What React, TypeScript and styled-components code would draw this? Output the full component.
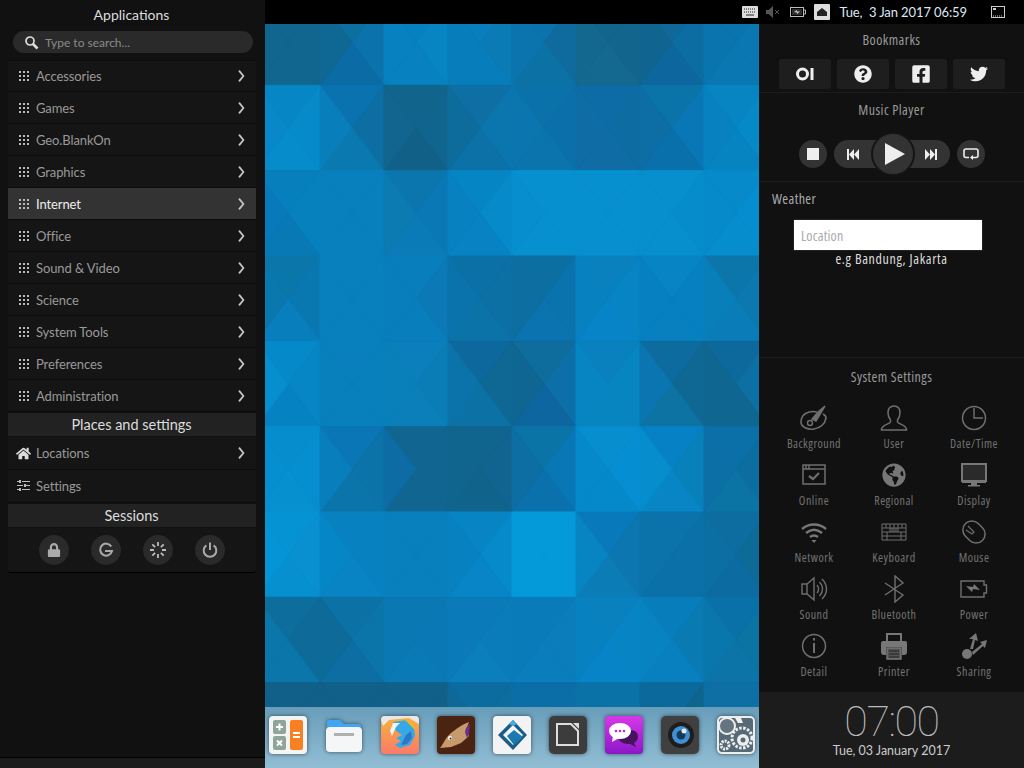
import React from "react"
import styled, { createGlobalStyle } from "styled-components"
import {
  FaGlobeAmericas,
  FaHome,
  FaLock,
  FaQuestionCircle,
  FaFacebookSquare,
  FaTwitter,
} from "react-icons/fa"

const GlobalStyle = createGlobalStyle`
  html, body {
    margin: 0;
    padding: 0;
    background: #000;
    overflow: hidden;
  }
  * {
    box-sizing: border-box;
  }
`

const Narrow = `"Open Sans", "Noto Sans", sans-serif`
const Humanist = `Lato, "Noto Sans", sans-serif`

const Screen = styled.div`
  width: 1024px;
  height: 768px;
  display: grid;
  grid-template-columns: 265px 494px 265px;
  grid-template-rows: 24px 744px;
  font-family: ${Humanist};
`

/* left menu */
const LeftPanel = styled.aside`
  grid-row: 1 / 3;
  grid-column: 1;
  background: #111;
  display: flex;
  flex-direction: column;
  height: 768px;
`
const MenuTitle = styled.div`
  height: 31px;
  line-height: 30px;
  padding-right: 2px;
  text-align: center;
  color: #ddd;
  font-size: 14px;
`
const SearchBox = styled.div`
  margin: 0 12px 7px 13px;
  height: 22px;
  border-radius: 11px;
  background: #2a2a2a;
  display: flex;
  align-items: center;
  gap: 6px;
  padding-left: 11px;
  color: #8a8a8a;
  font-size: 12px;
`
const MenuColumn = styled.div`
  margin: 0 9px 0 8px;
  border-top: 1px solid #0b0b0b;
  display: flex;
  flex-direction: column;
`
const MenuRow = styled.div<{ $active?: boolean; $tall?: boolean }>`
  height: ${(p) => (p.$tall ? 33 : 32)}px;
  display: flex;
  align-items: center;
  padding: 0 11px;
  gap: 7px;
  background: ${(p) => (p.$active ? "#333" : "#151515")};
  border-bottom: 1px solid #0c0c0c;
  color: ${(p) => (p.$active ? "#eee" : "#999")};
  font-size: 13px;
  letter-spacing: -0.1px;
  &:first-child {
    height: 31px;
  }
`
const MenuLabel = styled.span`
  flex: 1;
`
const IconSlot = styled.span`
  width: 15px;
  margin: 0 -2px 0 -3px;
  display: flex;
  align-items: center;
  justify-content: center;
`
const SectionHeader = styled.div`
  height: 24px;
  line-height: 24px;
  padding-right: 1px;
  text-align: center;
  background: #222;
  color: #ddd;
  font-size: 14.5px;
  margin-top: 1px;
  border-bottom: 1px solid #111;
`
const SessionRow = styled.div`
  height: 45px;
  display: flex;
  align-items: center;
  justify-content: center;
  gap: 22px;
  background: #151515;
  border-bottom: 1px solid #000;
  border-radius: 0 0 3px 3px;
`
const RoundButton = styled.div`
  width: 30px;
  height: 30px;
  border-radius: 50%;
  background: #2a2a2a;
  display: flex;
  align-items: center;
  justify-content: center;
  color: #aaa;
`
const LeftFooter = styled.div`
  margin-top: auto;
  height: 11px;
  background: #1c1c1c;
  border-top: 1px solid #000;
`

/* top bar */
const TopBar = styled.header`
  grid-column: 2 / 4;
  grid-row: 1;
  background: #000;
  display: flex;
  align-items: center;
  justify-content: flex-end;
  padding-right: 19px;
`
const Tray = styled.div`
  display: flex;
  align-items: center;
  margin-right: 9px;
  gap: 8px;
`
const ActiveTray = styled.div`
  width: 16px;
  height: 16px;
  background: #ddd;
  border-radius: 1px;
  display: flex;
  align-items: center;
  justify-content: center;
`
const ClockText = styled.div`
  color: #dde8f5;
  font-size: 13px;
  letter-spacing: -0.1px;
  white-space: pre;
  margin-right: 24px;
`

/* desktop */
const Desktop = styled.main`
  grid-column: 2;
  grid-row: 2;
  position: relative;
  display: flex;
  flex-direction: column;
  justify-content: flex-end;
  overflow: hidden;
`
const WallpaperSvg = styled.svg`
  position: absolute;
  inset: 0;
  width: 494px;
  height: 744px;
`
const Dock = styled.div`
  position: relative;
  height: 61px;
  padding: 9px 0 0 4px;
  display: flex;
  gap: 18px;
  background: linear-gradient(#689dba, #92bed4);
`
const DockIcon = styled.svg`
  width: 38px;
  height: 38px;
  flex: none;
  filter: drop-shadow(0 0 2px rgba(0, 0, 0, 0.55));
`

/* right panel */
const RightPanel = styled.aside`
  grid-column: 3;
  grid-row: 2;
  background: #111;
  display: flex;
  flex-direction: column;
`
const Section = styled.section<{ $h: number; $bare?: boolean }>`
  height: ${(p) => p.$h}px;
  border-bottom: ${(p) => (p.$bare ? "none" : "1px solid #1c1c1c")};
  display: flex;
  flex-direction: column;
`
const SectionTitle = styled.div<{ $top?: number }>`
  text-align: center;
  color: #999;
  font-family: ${Narrow};
  font-stretch: 75%;
  font-size: 14px;
  letter-spacing: 0.45px;
  line-height: 16px;
  padding-top: ${(p) => p.$top ?? 8}px;
`
const BookmarkRow = styled.div`
  display: flex;
  justify-content: center;
  gap: 6px;
  margin-top: 11px;
  padding-left: 1px;
`
const BookmarkButton = styled.div`
  width: 52px;
  height: 30px;
  border-radius: 3px;
  background: #1e1e1e;
  display: flex;
  align-items: center;
  justify-content: center;
  color: #eee;
`
const PlayerRow = styled.div`
  display: flex;
  justify-content: center;
  align-items: center;
  gap: 7px;
  margin-top: 22px;
  padding-left: 1px;
`
const PlayerRound = styled.div`
  width: 28px;
  height: 28px;
  border-radius: 50%;
  background: #333;
  display: flex;
  align-items: center;
  justify-content: center;
`
const PlayerPill = styled.div`
  position: relative;
  width: 116px;
  height: 28px;
  border-radius: 14px;
  background: #333;
  display: flex;
  align-items: center;
  justify-content: space-between;
  padding: 0 13px;
`
const PlayButton = styled.div`
  position: absolute;
  left: 37px;
  top: -8px;
  width: 44px;
  height: 44px;
  border-radius: 50%;
  background: #333;
  border: 2px solid #151515;
  display: flex;
  align-items: center;
  justify-content: center;
  padding-left: 3px;
`
const WeatherLabel = styled.div`
  color: #aaa;
  font-family: ${Narrow};
  font-stretch: 75%;
  font-size: 14px;
  letter-spacing: 0.4px;
  padding: 9px 0 0 13px;
  line-height: 16px;
`
const LocationInput = styled.input`
  display: block;
  margin: 12px 0 0 34px;
  width: 190px;
  height: 32px;
  border: 1px solid #222;
  background: #fff;
  padding: 0 7px;
  font-family: ${Narrow};
  font-stretch: 75%;
  font-size: 14px;
  letter-spacing: 0.2px;
  &::placeholder {
    color: #aaa;
  }
`
const Hint = styled.div`
  text-align: center;
  color: #ddd;
  font-family: ${Narrow};
  font-stretch: 75%;
  font-size: 14px;
  letter-spacing: 0.65px;
  line-height: 16px;
`
const SettingsGrid = styled.div`
  display: grid;
  grid-template-columns: repeat(3, 80px);
  grid-auto-rows: 51px;
  row-gap: 6px;
  padding-left: 15px;
  margin-top: 15px;
`
const SettingItem = styled.div`
  display: flex;
  flex-direction: column;
  align-items: center;
  color: #737373;
  font-family: ${Narrow};
  font-stretch: 75%;
  font-size: 12px;
  letter-spacing: 0.5px;
  line-height: 14px;
`
const SettingIcon = styled.div`
  height: 36px;
  margin-bottom: 1px;
  display: flex;
  align-items: center;
  justify-content: center;
`
const ClockPanel = styled.div`
  flex: 1;
  background: #1c1c1c;
  text-align: center;
  color: #ccc;
`
const BigTime = styled.div`
  font-family: Roboto, Lato, sans-serif;
  font-weight: 100;
  font-size: 43px;
  letter-spacing: -1.5px;
  line-height: 36px;
  margin-top: 11px;
  color: #bbb;
`
const DateLine = styled.div`
  font-size: 12.5px;
  line-height: 16px;
  margin-top: 4px;
`
const BatterySvg = styled.svg`
  margin-left: 2px;
`

/* wallpaper: one row per screen row, four triangles per cell, clockwise from the top */
const wallpaper: string[][] = [
  ["10668f 10668f 10668f 10668f", "0d6f9f 0a74ae 0b6ba6 10668f", "0681bf 0686c3 0781bf 0781bf", "0880bd 0a7ab4 087dbb 087dbb", "0a72ad 10699a 0c72a5 0a75b2", "12648c 12648c 146a90 136890", "11689a 0b6ea6 0c669f 11648c", "0a73ad 0b78b2 0a78b4 0a73ad"],
  ["0685c4 078ac9 068ccc 0888c8", "0a72af 0e6b9f 0a7aaf 0781bf", "11648c 10658f 115f87 11658f", "0d6fa4 0a78b0 0c71a8 0e6a9a", "0b70a8 0b6fa8 0b74ad 0b76b0", "0d6ca5 0d6ca0 0f6ca5 0f6ca5", "0a74a8 0878b8 0a6fab 0d6da3", "0685c2 068ac9 0682c0 0780bf"],
  ["0680bd 0783bf 0a78b4 0878bb", "0880bd 0880bd 0880bd 0880bd", "0a75ab 0a78b5 0a7cb9 0b7bb0", "0685c4 068ccc 0782c3 0780bf", "0690d0 0690d0 0690d0 068dce", "0690cf 0690cf 0690cf 0690cf", "068ecd 068ccb 068ecd 068ecd", "068ac8 058fd0 058dcd 0689c8"],
  ["0b75a8 0a78b0 0980bf 0a78ad", "0880be 0880be 0880be 0880be", "087fbd 0a78b4 087fbd 087fbd", "0b70a6 0c6fa3 0c74a9 0b74ac", "0c6e9e 0a74b0 0a74b2 0d6da0", "0880bd 0685c4 0785c8 0880c0", "0685c4 0680c0 0880bf 0680c0", "0c74a7 0c78ad 0a7cb9 0880bc"],
  ["068ac8 0785c4 0580c0 0690d0", "0a7fbd 0880bc 0880bc 0880bc", "0a7fbc 0a7bb5 0a7fba 0a80bb", "0d679c 10658f 0c72a5 0b75ae", "0e6e9c 0b70aa 0d659f 10658f", "0880bd 0785c0 0785c0 0785c4", "0d6a9e 10658f 0c74a4 0977b5", "0d699c 0c72a8 0f668f 0f668f"],
  ["068ccc 068fd0 0690d0 058fd0", "0a76b8 0b72a5 0b74a8 0880c0", "10658f 10658f 10648f 0c6ea8", "10658f 10648f 10628a 10658f", "0b74a5 0878b8 0b70ae 0d6da0", "068fd0 058fd2 0688c9 0688c9", "0780c5 0880b8 0785c4 058fd0", "0b70a8 0c6ca0 0c74a5 0c70a8"],
  ["0493d5 0a8fcf 068fcf 0496d8", "0880c0 0880c0 0883c3 0488c8", "0880bd 0880bd 0880bd 0880bd", "0684c4 068bca 0785c8 0880bf", "049ada 049ada 049ada 049ada", "0878bc 0c74ac 0b7cb5 0688c5", "0b74aa 0b6fa8 0b70a8 0c72aa", "0d6ca0 0e6a95 0c6ca3 0b70a6"],
  ["0d6d9d 0f6795 0b78ab 0a78ab", "0c72a5 0b75ab 0c6ea2 0f6895", "0a78b2 0a78b4 0a7ab8 0a78b2", "0a7ab8 0a7cba 0a80bd 0a7ab8", "0a7ab8 0a7dba 0a7fbe 0a7ab8", "0880bd 0785c4 0685c8 0880c0", "087cbb 0a78b0 0880c0 0685c4", "0a70a8 0c74a2 0c74a5 0a78ae"],
  ["11608a 11608a 11608a 11608a", "11608a 11608a 11608a 11608a", "11608a 11608a 11608a 11608a", "0d6ca0 0b6e9f 0b6e9f 0e6898", "0b6ea6 0b6ea6 0b6ea6 0b6ea6", "0b72a8 0b72a8 0b72a8 0b72a8", "0c6a9e 0f638c 0f638c 0c6a9e", "0d6fa3 0d6fa3 0d6fa3 0d6fa3"],
]

const toRgb = (hex: string) => [0, 2, 4].map((i) => parseInt(hex.slice(i, i + 2), 16))

// pulls the four triangles of a cell a bit towards their mean, the edges are soft in the picture
const softenCell = (cell: string) => {
  const parts = cell.split(" ").map(toRgb)
  const mean = [0, 1, 2].map((k) => parts.reduce((s, p) => s + p[k], 0) / 4)
  return parts.map((p) => `rgb(${p.map((v, k) => Math.round(v * 0.75 + mean[k] * 0.25)).join(",")})`)
}

const Wallpaper = () => {
  const w = 64
  const h = 768 / 9
  return (
    <WallpaperSvg viewBox="265 24 494 744">
      {wallpaper.map((row, r) =>
        row.map((cell, c) => {
          const x = 256 + c * w
          const y = r * h
          const mid = `${x + w / 2},${y + h / 2}`
          const corners = [
            `${x},${y} ${x + w},${y}`,
            `${x + w},${y} ${x + w},${y + h}`,
            `${x + w},${y + h} ${x},${y + h}`,
            `${x},${y + h} ${x},${y}`,
          ]
          return softenCell(cell).map((col, i) => (
            <polygon key={`${r}-${c}-${i}`} points={`${corners[i]} ${mid}`} fill={col} stroke={col} strokeWidth={1} />
          ))
        })
      )}
    </WallpaperSvg>
  )
}

/* small icons */
const DotsIcon = () => (
  <svg width="10" height="10" viewBox="0 0 10 10" fill="#bbb">
    {[0, 4, 8].map((y) => [0, 4, 8].map((x) => <rect key={`${x}${y}`} x={x} y={y} width="2" height="2" />))}
  </svg>
)
const Chevron = () => (
  <svg width="7" height="12" viewBox="0 0 7 12" fill="none" stroke="#c4c4c4" strokeWidth="1.8">
    <path d="M1 .6 5.400 6 1 11.400" />
  </svg>
)
const SearchIcon = () => (
  <svg width="15" height="15" viewBox="0 0 15 15" fill="none" stroke="#ddd">
    <circle cx="6" cy="6" r="4" strokeWidth="1.7" />
    <path d="M9 9l4.500 4.500" strokeWidth="2.600" />
  </svg>
)
const SlidersIcon = () => (
  <svg width="13" height="12" viewBox="0 0 13 12" fill="#bbb">
    <rect x="0" y="1" width="2" height="1" />
    <rect x="5" y="1" width="8" height="1" />
    <rect x="2" y="0" width="2" height="3" />
    <rect x="0" y="5" width="6" height="1" />
    <rect x="9" y="5" width="4" height="1" />
    <rect x="7" y="4" width="2" height="3" />
    <rect x="0" y="9" width="2" height="1" />
    <rect x="5" y="9" width="8" height="1" />
    <rect x="2" y="8" width="2" height="3" />
  </svg>
)
const RestartIcon = () => (
  <svg width="16" height="16" viewBox="0 0 16 16" fill="none" stroke="#aaa" strokeWidth="2">
    <path d="M13.300 4.500A6 6 0 1 0 14 9H7" />
  </svg>
)
const SpinnerIcon = () => (
  <svg width="16" height="16" viewBox="0 0 16 16" stroke="#bbb" strokeWidth="1.8">
    <path d="M8 0v4M8 12v4M0 8h4M12 8h4M2.300 2.300l2.800 2.800M10.900 10.900l2.800 2.800M2.300 13.700l2.800-2.800M10.900 5.100l2.800-2.800" />
  </svg>
)
const PowerIcon = () => (
  <svg width="16" height="16" viewBox="0 0 16 16" fill="none" stroke="#aaa" strokeWidth="2">
    <path d="M4.400 3.400a6.300 6.300 0 1 0 7.200 0M8 .5V8" />
  </svg>
)
const KeyboardTray = () => (
  <svg width="16" height="12" viewBox="0 0 16 12">
    <rect width="16" height="12" rx="1" fill="#ddd" />
    <path d="M2 3h12M2 6h12" stroke="#222" strokeDasharray="1 1" />
    <path d="M4 9h8" stroke="#222" />
  </svg>
)
const MuteTray = () => (
  <svg width="14" height="12" viewBox="0 0 14 12" fill="#555">
    <path d="M0 4h2.500L7 0v12L2.500 8H0z" />
    <path d="M9 4l4 4M13 4l-4 4" stroke="#555" />
  </svg>
)
const BatteryTray = () => (
  <BatterySvg width="16" height="10" viewBox="0 0 16 10" fill="none" stroke="#bbb">
    <rect x=".5" y=".5" width="13" height="9" />
    <path d="M14 3h1.500v4H14" />
    <rect x="2" y="2" width="10" height="6" fill="#bbb" fillOpacity=".25" stroke="none" />
    <path d="M4 5l3-2v1.500h3L7 7V5.500z" fill="#ccc" stroke="none" />
  </BatterySvg>
)
const WindowTray = () => (
  <svg width="14" height="12" viewBox="0 0 14 12" fill="none" stroke="#ccc">
    <rect x=".5" y=".5" width="13" height="11" />
    <rect x="2" y="2" width="3" height="2" fill="#ccc" stroke="none" />
    <path d="M2 10h10" strokeDasharray="1 1" />
  </svg>
)
const OpenIcon = () => (
  <svg width="18" height="14" viewBox="0 0 18 14" fill="none" stroke="#eee">
    <circle cx="6.500" cy="7" r="5" strokeWidth="3" />
    <path d="M16 1v12" strokeWidth="3" />
  </svg>
)
const Repeat = () => (
  <svg width="16" height="13" viewBox="0 0 16 13" fill="none" stroke="#eee" strokeWidth="1.600">
    <path d="M6 9.500H3a2 2 0 0 1-2-2V3a2 2 0 0 1 2-2h10a2 2 0 0 1 2 2v4.500a2 2 0 0 1-2 2H8" />
    <path d="M10 7l-3 2.500L10 12" fill="#eee" stroke="none" />
  </svg>
)

/* system settings icons */
const Stroke = styled.svg.attrs({ width: 28, height: 28, viewBox: "0 0 28 28" })`
  fill: none;
  stroke: #6f6f6f;
  stroke-width: 1.4;
`
const settings: { label: string; icon: React.ReactNode }[] = [
  {
    label: "Background",
    icon: (
      <Stroke>
        <path d="M17 8C9 6 1 10 1 18c0 5 7 8 13 7 6-1 11-5 12-11 0-2-1-3-3-4" strokeWidth="1.600" />
        <circle cx="10" cy="19" r="2.500" />
        <path d="M12 15l4 2 5-8 4-7-6 5z" fill="#6f6f6f" />
      </Stroke>
    ),
  },
  {
    label: "User",
    icon: (
      <Stroke>
        <path d="M14 2c-4 0-6 3-6 7 0 3 1 5 2.500 7v2c-1 2-8 3-9 7v1h25v-1c-1-4-8-5-9-7v-2c1.500-2 2.500-4 2.500-7 0-4-2-7-6-7z" strokeWidth="1.500" />
      </Stroke>
    ),
  },
  {
    label: "Date/Time",
    icon: (
      <Stroke>
        <circle cx="14" cy="14" r="11.500" strokeWidth="1.500" />
        <path d="M14 4v10h9" />
      </Stroke>
    ),
  },
  {
    label: "Online",
    icon: (
      <Stroke>
        <rect x="3" y="4" width="22" height="19" strokeWidth="1.500" />
        <path d="M3 8h22M6 4v4M9 4v4" />
        <path d="M9 15l4 3 6-6" strokeWidth="2.200" />
      </Stroke>
    ),
  },
  { label: "Regional", icon: <FaGlobeAmericas size={24} color="#777" /> },
  {
    label: "Display",
    icon: (
      <Stroke>
        <path d="M2 3h24v17H2z" fill="#2a2a2a" stroke="#777" strokeWidth="2" />
        <path d="M2 19h24v3H2zM11 22h6v2h-6zM8 24h12v1.500H8z" fill="#777" stroke="none" />
      </Stroke>
    ),
  },
  {
    label: "Network",
    icon: (
      <Stroke>
        <path d="M2 11c7-6 17-6 24 0M6 15c5-4 11-4 16 0M10 19c2.500-2 5.500-2 8 0" strokeWidth="2.400" stroke="#777" />
        <path d="M11.500 22h5L14 25z" fill="#777" stroke="none" />
      </Stroke>
    ),
  },
  {
    label: "Keyboard",
    icon: (
      <Stroke>
        <path d="M2 6h24v16H2zM2 10h24M2 14h24M2 18h24M6 6v4M10 6v8M14 6v8M18 6v8M22 6v4M7 14v8M21 14v8M12 10v4M16 10v4" strokeWidth="1" />
      </Stroke>
    ),
  },
  {
    label: "Mouse",
    icon: (
      <Stroke>
        <rect x="5" y="2" width="18" height="24" rx="9" transform="rotate(-45 14 14)" strokeWidth="1.500" />
        <path d="M8 8l6 6-2 2M6 12l6 4" strokeWidth="1.200" />
      </Stroke>
    ),
  },
  {
    label: "Sound",
    icon: (
      <Stroke>
        <path d="M2 9h5l7-6v22l-7-6H2zM7 9v10" />
        <path d="M17 10c2 2 2 6 0 8M19.500 7c4 4 4 10 0 14M22 4c6 6 6 14 0 20" />
      </Stroke>
    ),
  },
  {
    label: "Bluetooth",
    icon: (
      <Stroke>
        <path d="M5 8l18 12-8 7V1l8 7L5 20" />
      </Stroke>
    ),
  },
  {
    label: "Power",
    icon: (
      <Stroke>
        <path d="M1 6h23v4h2.500v8H24v4H1z" strokeWidth="1.400" />
        <path d="M6 11l7 1 1-3 6 6-7-1-1 3z" fill="#777" stroke="none" />
      </Stroke>
    ),
  },
  {
    label: "Detail",
    icon: (
      <Stroke>
        <circle cx="14" cy="14" r="11.500" strokeWidth="1.500" />
        <path d="M14 11v10" strokeWidth="2" />
        <path d="M14 6v2.500" strokeWidth="2" />
      </Stroke>
    ),
  },
  {
    label: "Printer",
    icon: (
      <Stroke>
        <path d="M7 9V2h14v7" strokeWidth="2" stroke="#777" />
        <path d="M3 9h22a2 2 0 0 1 2 2v9a3 3 0 0 1-3 3h-2v-8H6v8H4a3 3 0 0 1-3-3v-9a2 2 0 0 1 2-2z" fill="#777" stroke="none" />
        <path d="M7 16h14v11H7z" fill="#555" stroke="#777" />
        <path d="M9 19h10M9 22h10M9 25h10" stroke="#333" />
      </Stroke>
    ),
  },
  {
    label: "Sharing",
    icon: (
      <Stroke>
        <circle cx="7" cy="22" r="5" fill="#777" stroke="none" />
        <path d="M10 17L13 7h-4l7-6 2 8-3-1-2 9z" fill="#777" stroke="none" />
        <path d="M12 20l10-8-2-2 7-2-2 8-2-2-10 9z" fill="#777" stroke="none" />
      </Stroke>
    ),
  },
]

/* dock */
const dockIcons = [
  <>
    <rect width="38" height="38" rx="4" fill="#f4f4f4" />
    <rect x="4" y="4" width="13" height="14" rx="2" fill="#8fa59c" />
    <rect x="4" y="20" width="13" height="14" rx="2" fill="#8fa59c" />
    <rect x="21" y="4" width="13" height="30" rx="2" fill="#f97f23" />
    <path d="M7 11h7M10.500 7.500v7M8 24.500l5 5M13 24.500l-5 5M24 17h7M24 21h7" stroke="#fff" strokeWidth="2" />
  </>,
  <>
    <path d="M2 14V6a2 2 0 0 1 2-2h11l4 4h15a2 2 0 0 1 2 2v4z" fill="#42a5f1" />
    <rect x="1" y="11" width="36" height="25" rx="4" fill="#f5f6f8" />
    <rect x="9" y="17" width="20" height="3" fill="#b0b0b0" />
  </>,
  <>
    <defs>
      <linearGradient id="fxbg" x1="0" y1="0" x2="0" y2="1">
        <stop offset="0" stopColor="#f7b23a" />
        <stop offset="1" stopColor="#fb7b6b" />
      </linearGradient>
    </defs>
    <rect width="38" height="38" rx="4" fill="url(#fxbg)" />
    <path d="M0 4a4 4 0 0 1 4-4h30a4 4 0 0 1 4 4v4L28 2 8 4 2 10z" fill="#e8e8e8" />
    <path d="M12 6l14-2 7 6 1 10-5 9-10 3-5-3 6-4-5-3 6-3-6-4z" fill="#37a8e6" />
    <path d="M25 19l5-4 1 7-5 6-6 1z" fill="#2b78c8" />
    <path d="M12 7l7 0-4 4-4 9-2-5z" fill="#f3f3f3" />
    <path d="M22 2l10 5 3 8-5-5z" fill="#f1b42f" />
  </>,
  <>
    <rect width="38" height="38" rx="4" fill="#4a2410" />
    <path d="M3 32c4-5 5-10 11-15 5-4 12-9 18-11l-3 8 3 6-8 7-10 4z" fill="#c69a6c" />
    <path d="M29 12l4-4-1 10-2 4-2-6z" fill="#6b2f8a" />
    <circle cx="13" cy="22" r="2" fill="#fff" />
    <circle cx="13.500" cy="22.500" r="1" fill="#222" />
  </>,
  <>
    <rect width="38" height="38" rx="4" fill="#f3f3f3" />
    <path d="M20 4l14 15-14 15L5 19z" fill="#1a5c86" />
    <path d="M20 9l10 10-10 10L10 19z" fill="#f3f3f3" />
    <path d="M14 20l7-6 9 7-9 8z" fill="#1a7ab0" />
    <path d="M20 4l-4 4 4 2 4-2z" fill="#4aa8dc" />
  </>,
  <>
    <rect width="38" height="38" rx="5" fill="#3c3c3c" />
    <path d="M8 8h14l7 7v14H8z" fill="none" stroke="#ddd" strokeWidth="2" />
    <path d="M24 7h6v6z" fill="#ddd" />
  </>,
  <>
    <defs>
      <linearGradient id="chatbg" x1="0" y1="0" x2="0" y2="1">
        <stop offset="0" stopColor="#d838e8" />
        <stop offset="1" stopColor="#8b18c8" />
      </linearGradient>
    </defs>
    <rect width="38" height="38" rx="4" fill="url(#chatbg)" />
    <path d="M22 15c6-2 11 0 11 6 0 3-2 5-4 6l2 4-6-3c-5 0-10-1-11-5z" fill="#45155c" />
    <ellipse cx="15" cy="15" rx="11" ry="8" fill="#fff" />
    <path d="M8 20l-1 6 7-4z" fill="#fff" />
    <circle cx="11" cy="15" r="1.300" fill="#b62ad8" />
    <circle cx="15" cy="15" r="1.300" fill="#b62ad8" />
    <circle cx="19" cy="15" r="1.300" fill="#b62ad8" />
  </>,
  <>
    <rect width="38" height="38" rx="5" fill="#404040" />
    <circle cx="20" cy="19" r="13" fill="#1d1d1d" />
    <circle cx="20" cy="19" r="9" fill="#3f8fd2" />
    <circle cx="20" cy="19" r="4.500" fill="#123a5c" />
    <circle cx="23" cy="15" r="2.500" fill="#e8e8e8" />
  </>,
  <>
    <rect x="1" y="1" width="36" height="36" rx="4" fill="#566a76" stroke="#eee" strokeWidth="2" />
    <circle cx="10" cy="10" r="8" fill="#64757f" stroke="#eee" strokeWidth="2" />
    <circle cx="25" cy="22" r="10" fill="none" stroke="#eee" strokeWidth="3" strokeDasharray="2.500 1.500" />
    <circle cx="26" cy="24" r="6" fill="#eee" />
    <circle cx="26" cy="24" r="2.500" fill="#566a76" />
    <circle cx="8" cy="29" r="4" fill="none" stroke="#eee" strokeWidth="3" strokeDasharray="2 1" />
    <path d="M18 2h6l2 5h-5z" fill="#eee" />
  </>,
]

const categories = ["Accessories", "Games", "Geo.BlankOn", "Graphics", "Internet", "Office", "Sound & Video", "Science", "System Tools", "Preferences", "Administration"]

export default function App() {
  return (
    <Screen>
      <GlobalStyle />
      <LeftPanel>
        <MenuTitle>Applications</MenuTitle>
        <SearchBox>
          <SearchIcon />
          Type to search...
        </SearchBox>
        <MenuColumn>
          {categories.map((name) => (
            <MenuRow key={name} $active={name === "Internet"}>
              <DotsIcon />
              <MenuLabel>{name}</MenuLabel>
              <Chevron />
            </MenuRow>
          ))}
          <SectionHeader>Places and settings</SectionHeader>
          <MenuRow $tall>
            <IconSlot>
              <FaHome size={15} color="#ddd" />
            </IconSlot>
            <MenuLabel>Locations</MenuLabel>
            <Chevron />
          </MenuRow>
          <MenuRow $tall>
            <IconSlot>
              <SlidersIcon />
            </IconSlot>
            <MenuLabel>Settings</MenuLabel>
          </MenuRow>
          <SectionHeader>Sessions</SectionHeader>
          <SessionRow>
            <RoundButton>
              <FaLock size={14} />
            </RoundButton>
            <RoundButton>
              <RestartIcon />
            </RoundButton>
            <RoundButton>
              <SpinnerIcon />
            </RoundButton>
            <RoundButton>
              <PowerIcon />
            </RoundButton>
          </SessionRow>
        </MenuColumn>
        <LeftFooter />
      </LeftPanel>

      <TopBar>
        <Tray>
          <KeyboardTray />
          <MuteTray />
          <BatteryTray />
          <ActiveTray>
            <svg width="10" height="8" viewBox="0 0 10 8" fill="#222">
              <path d="M0 8V4l5-4 5 4v4z" />
            </svg>
          </ActiveTray>
        </Tray>
        <ClockText>{"Tue,  3 Jan 2017 06:59"}</ClockText>
        <WindowTray />
      </TopBar>

      <Desktop>
        <Wallpaper />
        <Dock>
          {dockIcons.map((icon, i) => (
            <DockIcon key={i} viewBox="0 0 38 38">
              {icon}
            </DockIcon>
          ))}
        </Dock>
      </Desktop>

      <RightPanel>
        <Section $h={69}>
          <SectionTitle>Bookmarks</SectionTitle>
          <BookmarkRow>
            <BookmarkButton>
              <OpenIcon />
            </BookmarkButton>
            <BookmarkButton>
              <FaQuestionCircle size={18} />
            </BookmarkButton>
            <BookmarkButton>
              <FaFacebookSquare size={20} />
            </BookmarkButton>
            <BookmarkButton>
              <FaTwitter size={18} />
            </BookmarkButton>
          </BookmarkRow>
        </Section>
        <Section $h={89}>
          <SectionTitle $top={9}>Music Player</SectionTitle>
          <PlayerRow>
            <PlayerRound>
              <svg width="12" height="12">
                <rect width="12" height="12" fill="#eee" />
              </svg>
            </PlayerRound>
            <PlayerPill>
              <svg width="12" height="11" viewBox="0 0 12 11" fill="#eee">
                <path d="M0 0h2v11H0zM7 0v11L2 5.500zM12 0v11L7 5.500z" />
              </svg>
              <svg width="12" height="11" viewBox="0 0 12 11" fill="#eee">
                <path d="M12 0h-2v11h2zM5 0v11l5-5.500zM0 0v11l5-5.500z" />
              </svg>
              <PlayButton>
                <svg width="20" height="22" viewBox="0 0 20 22" fill="#eee">
                  <path d="M0 0l20 11L0 22z" />
                </svg>
              </PlayButton>
            </PlayerPill>
            <PlayerRound>
              <Repeat />
            </PlayerRound>
          </PlayerRow>
        </Section>
        <Section $h={176}>
          <WeatherLabel>Weather</WeatherLabel>
          <LocationInput placeholder="Location" readOnly />
          <Hint>e.g Bandung, Jakarta</Hint>
        </Section>
        <Section $h={334} $bare>
          <SectionTitle $top={11}>System Settings</SectionTitle>
          <SettingsGrid>
            {settings.map((s) => (
              <SettingItem key={s.label}>
                <SettingIcon>{s.icon}</SettingIcon>
                {s.label}
              </SettingItem>
            ))}
          </SettingsGrid>
        </Section>
        <ClockPanel>
          <BigTime>07:00</BigTime>
          <DateLine>Tue, 03 January 2017</DateLine>
        </ClockPanel>
      </RightPanel>
    </Screen>
  )
}
